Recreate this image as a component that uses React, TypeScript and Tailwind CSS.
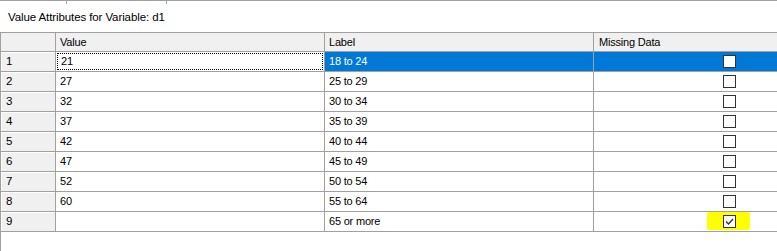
const rows: { n: number; value: string; label: string; missing: boolean }[] = [
  { n: 1, value: "21", label: "18 to 24", missing: false },
  { n: 2, value: "27", label: "25 to 29", missing: false },
  { n: 3, value: "32", label: "30 to 34", missing: false },
  { n: 4, value: "37", label: "35 to 39", missing: false },
  { n: 5, value: "42", label: "40 to 44", missing: false },
  { n: 6, value: "47", label: "45 to 49", missing: false },
  { n: 7, value: "52", label: "50 to 54", missing: false },
  { n: 8, value: "60", label: "55 to 64", missing: false },
  { n: 9, value: "", label: "65 or more", missing: true },
];

function CheckBox({ checked, highlight }: { checked: boolean; highlight?: boolean }) {
  return (
    <span className="relative flex h-[13px] w-[13px] items-center justify-center">
      {highlight && (
        <span className="absolute left-[-16px] top-[-3px] h-[18px] w-[43px] rounded-[2px] bg-[#ffff00]" />
      )}
      <span className="relative flex h-[13px] w-[13px] items-center justify-center border border-[#333333] bg-white">
        {checked && (
          <svg width="9" height="9" viewBox="0 0 9 9" className="block">
            <path d="M1 4.5 L3.5 7 L8 2" fill="none" stroke="#333333" strokeWidth="1.4" />
          </svg>
        )}
      </span>
    </span>
  );
}

export default function App() {
  return (
    <div className="h-[251px] w-[777px] overflow-hidden bg-white font-['Liberation_Sans',Arial,sans-serif] text-black">
      <div className="flex h-[4px] border-t border-[#a0a0a0]">
        <div className="w-[67px] border-r border-[#a0a0a0]" />
        <div className="w-[100px] border-r border-[#a0a0a0]" />
      </div>
      <div className="flex h-[28px] items-center px-[8px] text-[11.5px] tracking-[-0.1px]">
        Value Attributes for Variable: d1
      </div>
      <div className="h-[219px] w-[900px] border-l border-t border-[#a0a0a0] text-[11px] tracking-[-0.2px]">
        <div className="flex h-[19px] bg-[#f0f0f0]">
          <div className="w-[55px] border-b border-r border-[#a0a0a0]" />
          <div className="flex w-[269px] items-center border-b border-r border-[#a0a0a0] pl-[4px]">Value</div>
          <div className="flex w-[269px] items-center border-b border-r border-[#a0a0a0] pl-[4px]">Label</div>
          <div className="flex w-[272px] items-center border-b border-r border-[#a0a0a0] pl-[5px]">Missing Data</div>
        </div>
        {rows.map((r) => {
          const selected = r.n === 1;
          return (
            <div key={r.n} className="flex h-[20px]">
              <div className="flex w-[55px] items-center border-b border-r border-[#a0a0a0] bg-[#f0f0f0] pl-[5px] text-[11.5px] shadow-[inset_1px_1px_0_#ffffff]">
                {r.n}
              </div>
              <div className="flex w-[269px] items-center border-b border-r border-[#a0a0a0] p-px">
                <div
                  className={`flex h-full w-full items-center pl-[3px] ${
                    selected ? "border border-dotted border-black pl-[2px]" : ""
                  }`}
                >
                  {r.value}
                </div>
              </div>
              <div
                className={`flex w-[269px] items-center border-b border-r border-[#a0a0a0] pl-[4px] ${
                  selected ? "bg-[#0078d7] text-white" : ""
                }`}
              >
                {r.label}
              </div>
              <div
                className={`flex w-[272px] items-center border-b border-r border-[#a0a0a0] pl-[129px] ${
                  selected ? "bg-[#0078d7]" : ""
                }`}
              >
                <CheckBox checked={r.missing} highlight={r.missing} />
              </div>
            </div>
          );
        })}
      </div>
    </div>
  );
}
